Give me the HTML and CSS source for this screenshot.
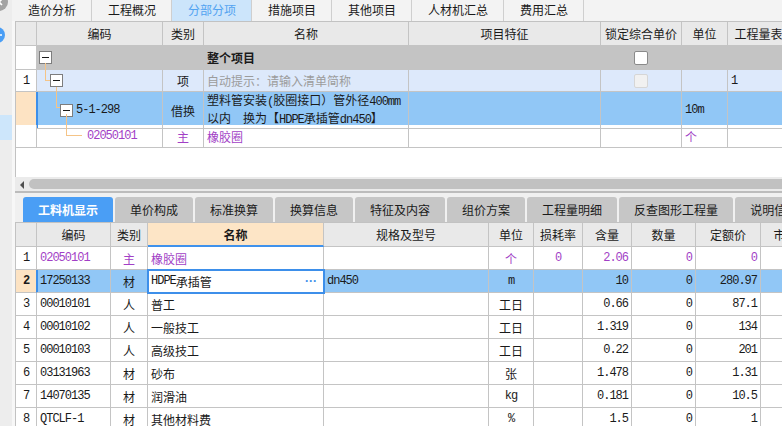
FILE: index.html
```html
<!DOCTYPE html>
<html lang="zh-CN">
<head>
<meta charset="utf-8">
<title>分部分项</title>
<link rel="stylesheet" href="styles.css">
</head>
<body>
<div class="app">
  <aside class="side">
    <svg class="side-svg" width="12" height="48" viewBox="0 0 12 48">
      <circle cx="-1" cy="2" r="9" fill="#a3a3a3"/>
      <path d="M2 -1 L-1 2 L2 5" fill="none" stroke="#fff" stroke-width="1.6"/>
      <circle cx="-3" cy="35" r="8" fill="#4a9ef5"/>
      <path d="M-3 35 H2" stroke="#fff" stroke-width="1.6"/>
    </svg>
    <div class="side-sel"></div>
  </aside>
  <main class="main">
    <nav class="toptabs">
      <span class="ttab">造价分析</span>
      <span class="ttab">工程概况</span>
      <span class="ttab on">分部分项</span>
      <span class="ttab">措施项目</span>
      <span class="ttab">其他项目</span>
      <span class="ttab">人材机汇总</span>
      <span class="ttab">费用汇总</span>
    </nav>
    <div class="content">
      <section class="upper">
        <div class="ugrid">
          <div class="row hdr h24">
            <div class="c"></div>
            <div class="c">编码</div>
            <div class="c">类别</div>
            <div class="c">名称</div>
            <div class="c">项目特征</div>
            <div class="c">锁定综合单价</div>
            <div class="c">单位</div>
            <div class="c">工程量表达式</div>
          </div>
          <div class="row total h24">
            <div class="c idx"></div>
            <div class="c tree"><span class="tb l0"></span><span class="ln down-a"></span></div>
            <div class="c"></div>
            <div class="c b">整个项目</div>
            <div class="c"></div>
            <div class="c ctr"><span class="chk"></span></div>
            <div class="c"></div>
            <div class="c"></div>
          </div>
          <div class="row item h22">
            <div class="c idx ctr n">1</div>
            <div class="c tree"><span class="ln elbow-a"></span><span class="tb l1"></span><span class="ln down-b"></span></div>
            <div class="c ctr">项</div>
            <div class="c hint">自动提示：请输入清单简称</div>
            <div class="c"></div>
            <div class="c ctr"><span class="chk dis"></span></div>
            <div class="c"></div>
            <div class="c n">1</div>
          </div>
          <div class="row sel h33">
            <div class="c idx cur"></div>
            <div class="c tree mark"><span class="ln elbow-b"></span><span class="tb l2"></span><span class="code n">5-1-298</span><span class="ln down-c"></span></div>
            <div class="c ctr">借换</div>
            <div class="c two"><span class="txt">塑料管安装<span class="n">(</span>胶圈接口）管外径<span class="n">400mm</span><br>以内　换为【<span class="n">HDPE</span>承插管<span class="n">dn450</span>】</span></div>
            <div class="c"></div>
            <div class="c"></div>
            <div class="c n">10m</div>
            <div class="c"></div>
          </div>
          <div class="row sub h23">
            <div class="c idx"></div>
            <div class="c tree"><span class="ln elbow-c"></span><span class="code n l3 pu">02050101</span></div>
            <div class="c ctr pu">主</div>
            <div class="c pu">橡胶圈</div>
            <div class="c"></div>
            <div class="c"></div>
            <div class="c pu">个</div>
            <div class="c"></div>
          </div>
        </div>
      </section>
      <div class="hscroll"><span class="hs-arrow"></span><span class="hs-thumb"></span></div>
      <div class="split"></div>
      <section class="lower">
        <nav class="btabs">
          <span class="btab on">工料机显示</span>
          <span class="btab">单价构成</span>
          <span class="btab">标准换算</span>
          <span class="btab">换算信息</span>
          <span class="btab">特征及内容</span>
          <span class="btab">组价方案</span>
          <span class="btab">工程量明细</span>
          <span class="btab">反查图形工程量</span>
          <span class="btab">说明信息</span>
        </nav>
        <div class="lgrid">
          <div class="row hdr h24">
            <div class="c"></div>
            <div class="c">编码</div>
            <div class="c">类别</div>
            <div class="c namehd">名称</div>
            <div class="c">规格及型号</div>
            <div class="c">单位</div>
            <div class="c">损耗率</div>
            <div class="c">含量</div>
            <div class="c">数量</div>
            <div class="c">定额价</div>
            <div class="c">市场价</div>
          </div>
          <div class="row h23">
            <div class="c idx ctr n">1</div>
            <div class="c n pu">02050101</div>
            <div class="c ctr pu">主</div>
            <div class="c pu">橡胶圈</div>
            <div class="c"></div>
            <div class="c ctr pu">个</div>
            <div class="c ctr n pu">0</div>
            <div class="c rt n pu">2.06</div>
            <div class="c rt n pu">0</div>
            <div class="c rt n pu">0</div>
            <div class="c"></div>
          </div>
          <div class="row sel h23">
            <div class="c idx cur ctr n b">2</div>
            <div class="c n mark">17250133</div>
            <div class="c ctr">材</div>
            <div class="c edit"><span class="n">HDPE</span>承插管<span class="dots">···</span></div>
            <div class="c n">dn450</div>
            <div class="c ctr n">m</div>
            <div class="c"></div>
            <div class="c rt n">10</div>
            <div class="c rt n">0</div>
            <div class="c rt n">280.97</div>
            <div class="c"></div>
          </div>
          <div class="row h23">
            <div class="c idx ctr n">3</div>
            <div class="c n">00010101</div>
            <div class="c ctr">人</div>
            <div class="c">普工</div>
            <div class="c"></div>
            <div class="c ctr">工日</div>
            <div class="c"></div>
            <div class="c rt n">0.66</div>
            <div class="c rt n">0</div>
            <div class="c rt n">87.1</div>
            <div class="c"></div>
          </div>
          <div class="row h23">
            <div class="c idx ctr n">4</div>
            <div class="c n">00010102</div>
            <div class="c ctr">人</div>
            <div class="c">一般技工</div>
            <div class="c"></div>
            <div class="c ctr">工日</div>
            <div class="c"></div>
            <div class="c rt n">1.319</div>
            <div class="c rt n">0</div>
            <div class="c rt n">134</div>
            <div class="c"></div>
          </div>
          <div class="row h23">
            <div class="c idx ctr n">5</div>
            <div class="c n">00010103</div>
            <div class="c ctr">人</div>
            <div class="c">高级技工</div>
            <div class="c"></div>
            <div class="c ctr">工日</div>
            <div class="c"></div>
            <div class="c rt n">0.22</div>
            <div class="c rt n">0</div>
            <div class="c rt n">201</div>
            <div class="c"></div>
          </div>
          <div class="row h23">
            <div class="c idx ctr n">6</div>
            <div class="c n">03131963</div>
            <div class="c ctr">材</div>
            <div class="c">砂布</div>
            <div class="c"></div>
            <div class="c ctr">张</div>
            <div class="c"></div>
            <div class="c rt n">1.478</div>
            <div class="c rt n">0</div>
            <div class="c rt n">1.31</div>
            <div class="c"></div>
          </div>
          <div class="row h23">
            <div class="c idx ctr n">7</div>
            <div class="c n">14070135</div>
            <div class="c ctr">材</div>
            <div class="c">润滑油</div>
            <div class="c"></div>
            <div class="c ctr n">kg</div>
            <div class="c"></div>
            <div class="c rt n">0.181</div>
            <div class="c rt n">0</div>
            <div class="c rt n">10.5</div>
            <div class="c"></div>
          </div>
          <div class="row h23">
            <div class="c idx ctr n">8</div>
            <div class="c n">QTCLF-1</div>
            <div class="c ctr">材</div>
            <div class="c">其他材料费</div>
            <div class="c"></div>
            <div class="c ctr n">%</div>
            <div class="c"></div>
            <div class="c rt n">1.5</div>
            <div class="c rt n">0</div>
            <div class="c rt n">1</div>
            <div class="c"></div>
          </div>
        </div>
      </section>
    </div>
  </main>
</div>
</body>
</html>
```

FILE: styles.css
```css
* { box-sizing: border-box; }
html, body { margin: 0; padding: 0; }
body {
  width: 782px;
  height: 426px;
  overflow: hidden;
  background: #f0f0f0;
  font-family: "Noto Sans CJK SC", "Noto Sans", sans-serif;
  font-size: 12px;
  color: #1a1a1a;
}
.app { display: flex; height: 426px; }

/* left strip */
.side {
  width: 12px;
  flex: none;
  background: #ededed;
  display: flex;
  flex-direction: column;
  overflow: hidden;
}
.side-svg { display: block; flex: none; }
.side-sel { height: 25px; margin-top: 67px; background: #cde6fb; flex: none; }

.main {
  flex: 1;
  min-width: 0;
  display: flex;
  flex-direction: column;
  overflow: hidden;
  background: #f7f7f7;
}

/* top tabs */
.toptabs {
  height: 21px;
  flex: none;
  display: flex;
  background: #f3f3f3;
}
.ttab {
  padding: 0 15px 0 16px;
  border-right: 1px solid #cfcfcf;
  line-height: 20px;
  white-space: nowrap;
}
.ttab.on { background: #cce5fb; color: #52a3f1; }

.content {
  flex: 1;
  display: flex;
  flex-direction: column;
  margin-left: 3px;
  min-height: 0;
}

/* upper pane */
.upper {
  height: 156px;
  flex: none;
  background: #fff;
  border-left: 1px solid #c2c2c2;
  border-top: 1px solid #c2c2c2;
  overflow: hidden;
}
.row { display: grid; }
.ugrid .row { grid-template-columns: 21px 126px 41px 205px 192px 81px 46px 86px; }
.lgrid .row { grid-template-columns: 21px 74px 37px 176px 165px 45px 49px 49px 64px 65px 62px; }
.h22 { height: 22px; }
.h23 { height: 23px; }
.h24 { height: 24px; }
.h33 { height: 33px; }

.c {
  position: relative;
  display: flex;
  align-items: center;
  padding: 0 3px;
  border-right: 1px solid #c4c4c4;
  border-bottom: 1px solid #c4c4c4;
  white-space: nowrap;
  min-width: 0;
}
.ctr { justify-content: center; }
.rt { justify-content: flex-end; }
.b { font-weight: bold; }
.n {
  font-family: "Liberation Mono", "Noto Sans CJK SC", monospace;
  letter-spacing: -1px;
}
.pu { color: #a23fc6; }
.hint { color: #9c9c9c; }

.hdr { background: #e9e9e9; }
.hdr .c { justify-content: center; }

.total { background: #c4c4c4; }
.item { background: #dde9fb; }
.sel { background: #91c7f6; }
.idx { background: #fff; }
.idx.cur { background: #fde3c3; border-right-color: #3d8fea; }
.mark { box-shadow: inset 1px 0 0 #3d8fea; }

.two .txt { display: block; line-height: 15px; }

/* tree */
.tree { padding-left: 0; }
.tb {
  position: relative;
  flex: none;
  width: 13px;
  height: 13px;
  border: 1px solid #7d7d7d;
  background: #fff;
}
.tb::after {
  content: "";
  position: absolute;
  left: 2px;
  right: 2px;
  top: 5px;
  height: 1px;
  background: #1a1a1a;
}
.l0 { margin-left: 2px; }
.l1 { margin-left: 13px; }
.l2 { margin-left: 23px; }
.code { margin-left: 3px; }
.code.l3 { margin-left: 50px; }
.ln { position: absolute; border-color: #f5c487; border-style: solid; border-width: 0; }
.down-a { left: 8px; top: 17px; bottom: -1px; border-left-width: 1px; }
.down-b { left: 19px; top: 17px; bottom: -1px; border-left-width: 1px; }
.down-c { left: 29px; top: 22px; bottom: -1px; border-left-width: 1px; }
.elbow-a { left: 8px; top: 0; width: 5px; height: 11px; border-left-width: 1px; border-bottom-width: 1px; }
.elbow-b { left: 19px; top: 0; width: 4px; height: 16px; border-left-width: 1px; border-bottom-width: 1px; }
.elbow-c { left: 29px; top: 0; width: 16px; height: 11px; border-left-width: 1px; border-bottom-width: 1px; }

.chk {
  width: 14px;
  height: 14px;
  border: 1px solid #8a8a8a;
  border-radius: 2px;
  background: #fff;
}
.chk.dis { background: #f1f1f1; border-color: #d6d6d6; }

/* scrollbar + splitter */
.hscroll {
  height: 14px;
  flex: none;
  display: flex;
  align-items: flex-start;
  background: #ebebeb;
  overflow: hidden;
}
.hs-arrow {
  flex: none;
  margin: 4px 0 0 5px;
  width: 0;
  height: 0;
  border-top: 4px solid transparent;
  border-bottom: 4px solid transparent;
  border-right: 4px solid #505050;
}
.hs-thumb {
  flex: 1;
  margin: 2px -10px 0 5px;
  height: 10px;
  border-radius: 5px;
  background: #c1c1c1;
}
.split { height: 2px; flex: none; background: #bcbcbc; }

/* lower pane */
.lower {
  flex: 1;
  background: #f0f0f0;
  padding-top: 4px;
  min-height: 0;
}
.btabs {
  display: flex;
  gap: 2px;
  height: 25px;
  padding-left: 8px;
  white-space: nowrap;
}
.btab {
  flex: none;
  padding: 0 15px;
  background: #c6c6c6;
  border-radius: 3px 3px 0 0;
  line-height: 25px;
}
.btab.on { background: #4a9ef5; color: #fff; font-weight: bold; }

.lgrid {
  background: #fff;
  border-left: 1px solid #c2c2c2;
  border-top: 1px solid #c2c2c2;
}
.hdr .namehd {
  background: #fde5c6;
  font-weight: bold;
  border-bottom: 2px solid #3f92ec;
}
.edit {
  background: #fff;
  z-index: 1;
  outline: 2px solid #3d8fea;
  outline-offset: -1px;
}
.dots {
  margin-left: auto;
  margin-right: 3px;
  color: #3d8fea;
  font-family: "Liberation Sans", sans-serif;
  font-weight: bold;
}
```
